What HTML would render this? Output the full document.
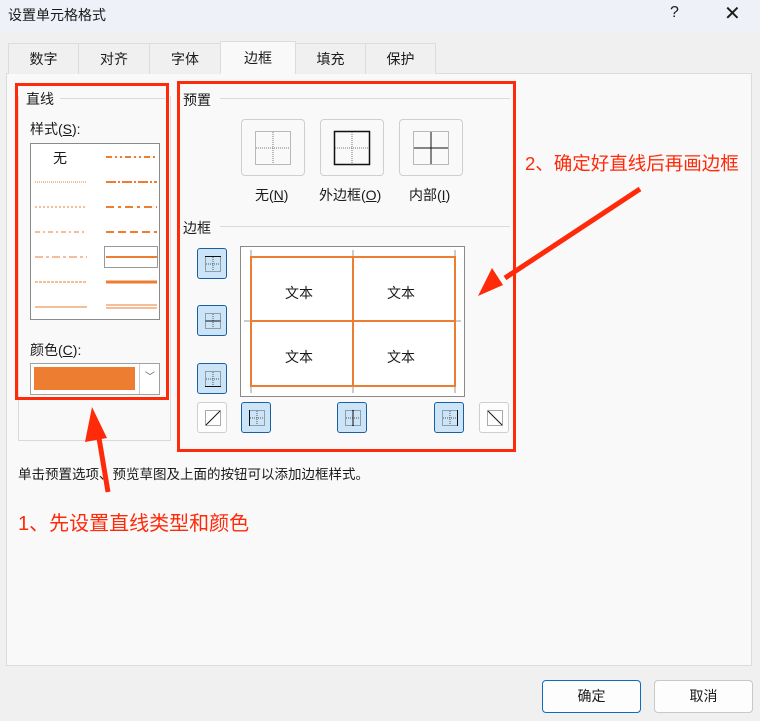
<!DOCTYPE html>
<html><head><meta charset="utf-8"><style>
*{margin:0;padding:0;box-sizing:border-box}
body{width:760px;height:721px;background:#f0f0f0;font-family:"Liberation Sans","Noto Sans CJK SC",sans-serif;font-size:14px;color:#1a1a1a;position:relative;overflow:hidden}
.a{position:absolute}
.title{left:0;top:0;width:760px;height:31px;background:#eef2f8}
.tab{top:43px;height:31px;border:1px solid #dcdcdc;border-bottom:none;background:#f0f0f0;text-align:center;line-height:31px;font-size:14px}
.panel{left:6px;top:73px;width:746px;height:593px;background:#f9f9f9;border:1px solid #dcdcdc}
.red{border:3px solid #ff2a0a}
.hl{height:1px;background:#dadada}
.pb{width:64px;height:57px;border:1px solid #cfcfcf;border-radius:4px;background:#f9f9f9}
.sb{width:30px;height:31px;border:1px solid #1c5fa0;border-radius:3px;background:#cce4f7}
.sw{width:30px;height:31px;border:1px solid #cfcfcf;border-radius:3px;background:#fdfdfd}
.btn{top:680px;width:99px;height:33px;border:1px solid #c8c8c8;border-radius:4px;background:#fdfdfd;text-align:center;line-height:31px}
.cell{font-size:14px;text-align:center}
</style></head><body>
<div class="a title"></div>
<div class="a" style="left:8px;top:5px;font-size:14px">设置单元格格式</div>
<div class="a" style="left:670px;top:4px;font-size:16px">?</div>
<div class="a" style="left:724px;top:1px;font-size:20px">✕</div>

<div class="a panel"></div>
<div class="a tab" style="left:8px;width:71px">数字</div>
<div class="a tab" style="left:78px;width:72px">对齐</div>
<div class="a tab" style="left:149px;width:72px">字体</div>
<div class="a tab" style="left:295px;width:71px">填充</div>
<div class="a tab" style="left:365px;width:71px">保护</div>
<div class="a tab" style="left:220px;top:41px;height:33px;width:76px;background:#f9f9f9;line-height:33px">边框</div>

<div class="a" style="left:18px;top:96px;width:153px;height:345px;border:1px solid #dadada;border-top:none"></div>
<div class="a hl" style="left:60px;top:98px;width:105px"></div>
<div class="a" style="left:26px;top:89px">直线</div>
<div class="a" style="left:30px;top:119px">样式(<u>S</u>):</div>
<div class="a" style="left:30px;top:143px;width:130px;height:177px;border:1px solid #8a8a8a;background:#fff">
<div class="a" style="left:22px;top:4px">无</div>
<svg width="128" height="175" class="a" style="left:0;top:0" stroke="#ed7d31">
<line x1="4" y1="38" x2="56" y2="38" stroke-dasharray="1 1"/>
<line x1="4" y1="63" x2="56" y2="63" stroke-dasharray="2 2"/>
<line x1="4" y1="88" x2="56" y2="88" stroke-dasharray="5 3 2 3"/>
<line x1="4" y1="113" x2="56" y2="113" stroke-dasharray="8 3 3 3"/>
<line x1="4" y1="138" x2="56" y2="138" stroke-dasharray="3 1"/>
<line x1="4" y1="163" x2="56" y2="163"/>
<line x1="75" y1="13" x2="126" y2="13" stroke-width="2" stroke-dasharray="6 3 2 3 2 3"/>
<line x1="75" y1="38" x2="126" y2="38" stroke-width="2" stroke-dasharray="10 2 2 2"/>
<line x1="75" y1="63" x2="126" y2="63" stroke-width="2" stroke-dasharray="8 4 3 4"/>
<line x1="75" y1="88" x2="126" y2="88" stroke-width="2" stroke-dasharray="8 4"/>
<line x1="75" y1="113" x2="126" y2="113" stroke-width="2"/>
<rect x="73.5" y="102.5" width="53" height="21" fill="none" stroke="#333" stroke-dasharray="1 1"/>
<line x1="75" y1="138" x2="126" y2="138" stroke-width="3"/>
<line x1="75" y1="161" x2="126" y2="161"/><line x1="75" y1="164" x2="126" y2="164"/>
</svg></div>
<div class="a" style="left:30px;top:340px">颜色(<u>C</u>):</div>
<div class="a" style="left:30px;top:363px;width:130px;height:32px;border:1px solid #a0a0a0;background:#fff">
<div class="a" style="left:3px;top:3px;width:101px;height:23px;background:#ed7d31"></div>
<div class="a" style="left:108px;top:0;width:21px;height:30px;border-left:1px solid #ccc;text-align:center;font-size:10px;line-height:28px;color:#555">﹀</div>
</div>
<div class="a red" style="left:15px;top:83px;width:154px;height:317px"></div>

<div class="a" style="left:183px;top:90px">预置</div>
<div class="a hl" style="left:220px;top:98px;width:290px"></div>
<div class="a pb" style="left:241px;top:119px"><svg width="62" height="55"><rect x="13.5" y="11.5" width="35" height="33" fill="none" stroke="#777" stroke-dasharray="1 1"/><path d="M31 12v32M14 28h34" stroke="#777" stroke-dasharray="1 1"/></svg></div>
<div class="a pb" style="left:320px;top:119px"><svg width="62" height="55"><rect x="13.5" y="11.5" width="35" height="33" fill="none" stroke="#111" stroke-width="1.5"/><path d="M31 12v32M14 28h34" stroke="#777" stroke-dasharray="1 1"/></svg></div>
<div class="a pb" style="left:399px;top:119px"><svg width="62" height="55"><rect x="13.5" y="11.5" width="35" height="33" fill="none" stroke="#777" stroke-dasharray="1 1"/><path d="M31 12v32M14 28h34" stroke="#111"/></svg></div>
<div class="a" style="left:255px;top:185px">无(<u>N</u>)</div>
<div class="a" style="left:319px;top:185px">外边框(<u>O</u>)</div>
<div class="a" style="left:409px;top:185px">内部(<u>I</u>)</div>
<div class="a" style="left:183px;top:218px">边框</div>
<div class="a hl" style="left:220px;top:226px;width:290px"></div>

<svg class="a" style="left:0;top:0" width="0" height="0"><defs><g id="ic"><rect x="7.5" y="7.5" width="15" height="15" fill="none" stroke="#555" stroke-dasharray="1 1"/><path d="M15 8v14M8 15h14" stroke="#555" stroke-dasharray="1 1"/></g></defs></svg>
<div class="a sb" style="left:197px;top:248px"><svg width="28" height="29"><use href="#ic"/><path d="M7 7.5h16" stroke="#111"/></svg></div>
<div class="a sb" style="left:197px;top:305px"><svg width="28" height="29"><use href="#ic"/><path d="M7 15h16" stroke="#111"/></svg></div>
<div class="a sb" style="left:197px;top:363px"><svg width="28" height="29"><use href="#ic"/><path d="M7 22.5h16" stroke="#111"/></svg></div>
<div class="a sw" style="left:197px;top:402px"><svg width="28" height="29"><rect x="7.5" y="7.5" width="15" height="15" fill="none" stroke="#555" stroke-dasharray="1 1"/><path d="M8 22L22 8" stroke="#111"/></svg></div>
<div class="a sb" style="left:241px;top:402px"><svg width="28" height="29"><use href="#ic"/><path d="M7.5 7v16" stroke="#111"/></svg></div>
<div class="a sb" style="left:337px;top:402px"><svg width="28" height="29"><use href="#ic"/><path d="M15 7v16" stroke="#111"/></svg></div>
<div class="a sb" style="left:434px;top:402px"><svg width="28" height="29"><use href="#ic"/><path d="M22.5 7v16" stroke="#111"/></svg></div>
<div class="a sw" style="left:479px;top:402px"><svg width="28" height="29"><rect x="7.5" y="7.5" width="15" height="15" fill="none" stroke="#555" stroke-dasharray="1 1"/><path d="M8 8L22 22" stroke="#111"/></svg></div>

<div class="a" style="left:240px;top:246px;width:225px;height:151px;border:1px solid #8a8a8a;background:#fff">
<svg class="a" style="left:0;top:0" width="223" height="149">
<path d="M10 3v6M112 3v6M214 3v6M10 140v6M112 140v6M214 140v6M3 74h6M214 74h6" stroke="#999"/>
<rect x="10" y="10" width="204" height="129" fill="none" stroke="#ed7d31" stroke-width="2"/>
<path d="M112 10v129M10 74h204" stroke="#ed7d31" stroke-width="2"/>
</svg>
<div class="a cell" style="left:44px;top:36px">文本</div>
<div class="a cell" style="left:146px;top:36px">文本</div>
<div class="a cell" style="left:44px;top:100px">文本</div>
<div class="a cell" style="left:146px;top:100px">文本</div>
</div>
<div class="a red" style="left:177px;top:81px;width:339px;height:371px"></div>

<div class="a" style="left:18px;top:463px;font-size:13.5px">单击预置选项、预览草图及上面的按钮可以添加边框样式。</div>
<div class="a" style="left:18px;top:507px;font-size:20px;color:#ff2a0a">1、先设置直线类型和颜色</div>
<div class="a" style="left:525px;top:150px;font-size:18.5px;color:#ff2a0a">2、确定好直线后再画边框</div>

<svg class="a" style="left:0;top:0" width="760" height="721">
<path d="M108 492L99 438" stroke="#ff2a0a" stroke-width="5"/>
<polygon points="92,407 85,442 107,438" fill="#ff2a0a"/>
<path d="M640 189L505 278" stroke="#ff2a0a" stroke-width="5"/>
<polygon points="478,296 492,268 503,285" fill="#ff2a0a"/>
</svg>

<div class="a btn" style="left:542px;border-color:#0f6cbd">确定</div>
<div class="a btn" style="left:654px">取消</div>
</body></html>
